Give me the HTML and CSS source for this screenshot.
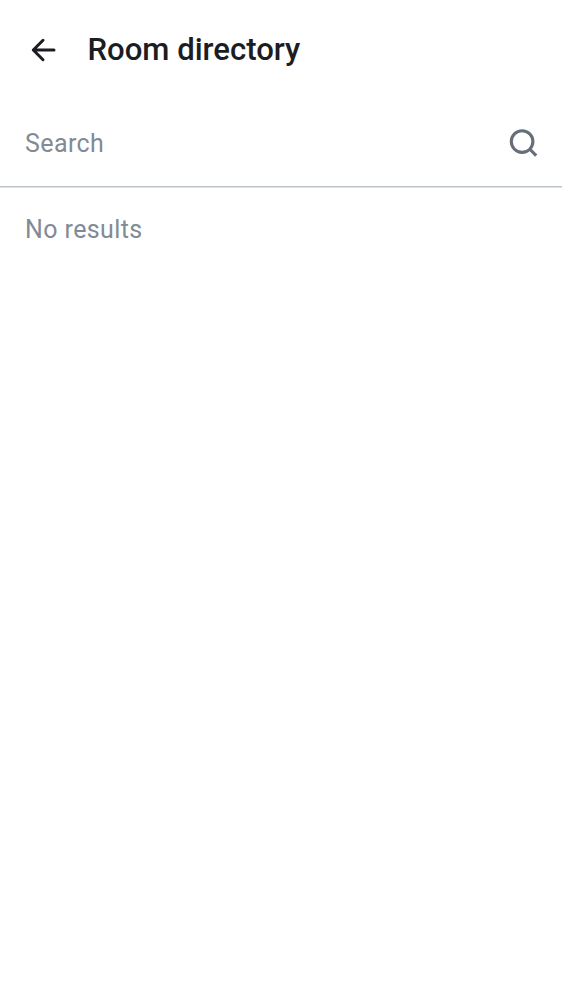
FILE: index.html
```
<!DOCTYPE html>
<html lang="en">
<head>
<meta charset="utf-8">
<title>Room directory</title>
<link rel="stylesheet" href="styles.css">
</head>
<body>
<header class="top-bar">
<svg class="back-icon" viewBox="0 0 28 28" aria-label="Back"><path d="M25 14H4.3M14 4.3 4.3 14l9.7 9.7"/></svg>
<h1 class="title">Room directory</h1>
</header>
<div class="search">
<span class="placeholder">Search</span>
<svg class="search-icon" viewBox="0 0 30 30" aria-label="Search"><circle cx="14.1" cy="13.6" r="10.8"/><path d="m21.6 21 6.6 6.6"/></svg>
</div>
<main class="results">No results</main>
</body>
</html>
```
FILE: styles.css
```
body {
  margin: 0;
  min-height: 1000px;
  background: #fff;
  font-family: Roboto, sans-serif;
}
.top-bar {
  display: flex;
  align-items: center;
  height: 100px;
  padding-left: 29px;
}
.back-icon {
  width: 28px;
  height: 28px;
  fill: none;
  stroke: #1b1d22;
  stroke-width: 3;
  stroke-linecap: round;
  stroke-linejoin: round;
}
.title {
  margin: 0 0 0 30.5px;
  font-size: 31.1px;
  font-weight: 500;
  line-height: 40px;
  color: #1b1d22;
}
.search {
  display: flex;
  align-items: center;
  justify-content: space-between;
  height: 86px;
  padding: 0 24px 0 25px;
  border-bottom: 1px solid #bdc4cc;
  box-shadow: 0 1px #dde1e5;
  color: #818a95;
}
.placeholder,
.results {
  font-size: 25px;
  line-height: 36px;
  letter-spacing: 0.4px;
}
.placeholder {
  padding-top: 2px;
}
.search-icon {
  width: 30px;
  height: 30px;
  fill: none;
  stroke: #656e79;
  stroke-width: 3.1;
}
.results {
  padding: 25px;
  color: #818a95;
}
```
